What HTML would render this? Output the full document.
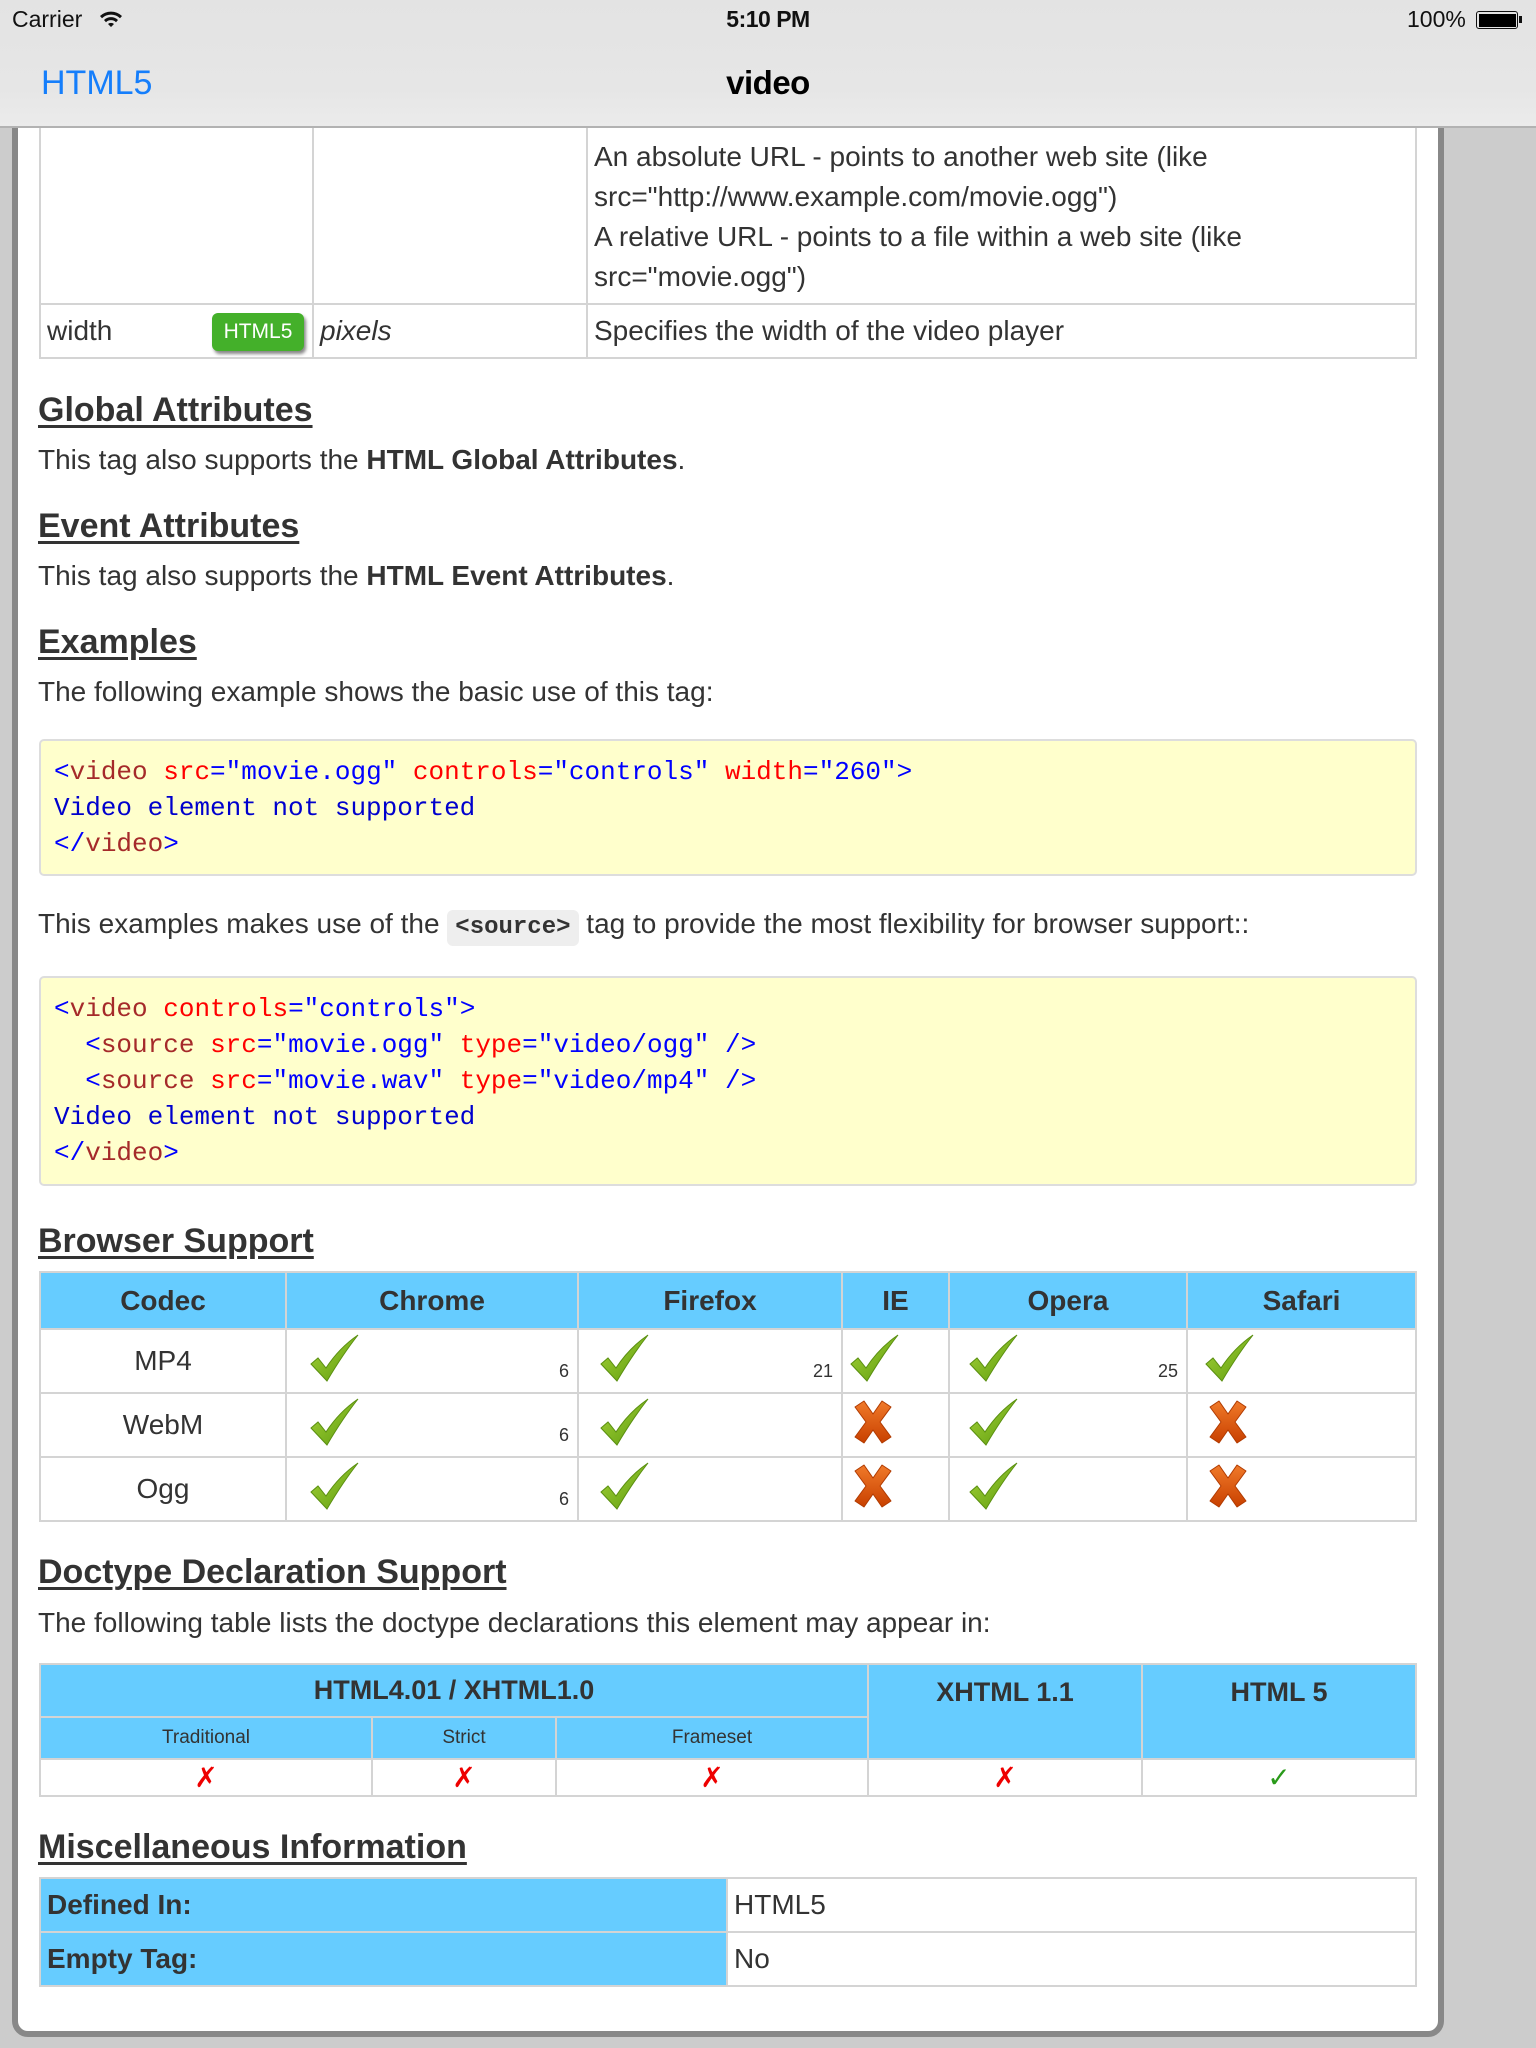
<!DOCTYPE html>
<html><head><meta charset="utf-8"><style>
*{margin:0;padding:0;box-sizing:border-box}
body{width:1536px;height:2048px;overflow:hidden;background:#ccc;font-family:"Liberation Sans",Arial,sans-serif;color:#333;position:relative}
.abs{position:absolute}
#status{left:0;top:0;width:1536px;height:128px;background:linear-gradient(#e3e3e3,#e6e6e6 70%,#ebebeb);border-bottom:2px solid #b2b2b2;z-index:5}
#card{left:12px;top:60px;width:1432px;height:1977px;background:#fff;border:6px solid #888;border-radius:16px}
table{border-collapse:collapse;position:absolute}
td,th{border:2px solid #d4d4d4}
h2{position:absolute;left:38px;font-size:34px;font-weight:bold;text-decoration:underline;text-decoration-thickness:3px;text-underline-offset:4px;color:#333;white-space:nowrap}
p{position:absolute;left:38px;font-size:28px;white-space:nowrap;color:#333}
.code{position:absolute;left:39px;width:1378px;background:#ffffcc;border:2px solid #ddd;border-radius:5px;font-family:"Liberation Mono",monospace;font-size:26px;padding:0 0 0 13px;line-height:36px;color:#0000cd;white-space:pre}
.t{color:#a52a2a}.b{color:#0000ff}.r{color:#ff0000}.v{color:#0000cd}
.hd{background:#66ccff}
</style></head><body>
<div id="card" class="abs"></div>
<div id="status" class="abs">
 <div class="abs" style="left:12px;top:6px;font-size:23px;color:#111">Carrier</div>
 <svg class="abs" style="left:98px;top:9px" width="26" height="20" viewBox="0 0 26 20"><path d="M2 7a16 16 0 0 1 22 0l-2 2.2a13 13 0 0 0-18 0z M6 11a10 10 0 0 1 14 0l-2 2.2a7 7 0 0 0-10 0z M10 15a4.5 4.5 0 0 1 6 0l-3 3z" fill="#111"/></svg>
 <div class="abs" style="left:0;width:1536px;top:6px;text-align:center;font-size:23px;color:#111;font-weight:bold;letter-spacing:-0.5px">5:10 PM</div>
 <div class="abs" style="left:1407px;top:6px;font-size:23px;color:#111">100%</div>
 <div class="abs" style="left:1476px;top:11px;width:42px;height:18px;border:1.5px solid #111;border-radius:3px;padding:1.5px"><div style="width:100%;height:100%;background:#000"></div></div>
 <div class="abs" style="left:1519px;top:16px;width:3px;height:7px;background:#111"></div>
 <div class="abs" style="left:41px;top:64px;font-size:34px;color:#157efb">HTML5</div>
 <div class="abs" style="left:0;width:1536px;top:64px;text-align:center;font-size:33px;color:#000;font-weight:bold;letter-spacing:-0.5px">video</div>
</div>

<table style="left:39px;top:100px;width:1378px;font-size:28px">
<tr style="height:203px"><td style="width:273px"></td><td style="width:274px"></td><td style="vertical-align:bottom;padding:0 6px 6px 6px;line-height:40px">An absolute URL - points to another web site (like<br>src="http://www.example.com/movie.ogg")<br>A relative URL - points to a file within a web site (like<br>src="movie.ogg")</td></tr>
<tr style="height:54px"><td style="padding-left:6px;position:relative">width<span class="abs" style="left:171px;top:8px;width:92px;height:38px;background:#44b02a;border-radius:6px;color:#fff;font-size:21px;line-height:38px;text-align:center;box-shadow:2px 3px 3px #888">HTML5</span></td><td style="padding-left:6px;font-style:italic">pixels</td><td style="padding-left:6px">Specifies the width of the video player</td></tr>
</table>

<h2 style="top:391px">Global Attributes</h2>
<p style="top:444px">This tag also supports the <b>HTML Global Attributes</b>.</p>
<h2 style="top:507px">Event Attributes</h2>
<p style="top:560px">This tag also supports the <b>HTML Event Attributes</b>.</p>
<h2 style="top:623px">Examples</h2>
<p style="top:676px">The following example shows the basic use of this tag:</p>

<div class="code" style="top:739px;height:137px;padding-top:13px"><span class="b">&lt;</span><span class="t">video</span> <span class="r">src</span><span class="b">="movie.ogg"</span> <span class="r">controls</span><span class="b">="controls"</span> <span class="r">width</span><span class="b">="260"&gt;</span>
<span class="v">Video element not supported</span>
<span class="b">&lt;/</span><span class="t">video</span><span class="b">&gt;</span></div>

<p style="top:908px">This examples makes use of the <span style="display:inline-block;background:#eee;border-radius:6px;font-family:'Liberation Mono',monospace;font-weight:bold;font-size:24px;padding:2px 8px;line-height:32px">&lt;source&gt;</span> tag to provide the most flexibility for browser support::</p>

<div class="code" style="top:976px;height:210px;padding-top:13px"><span class="b">&lt;</span><span class="t">video</span> <span class="r">controls</span><span class="b">="controls"&gt;</span>
  <span class="b">&lt;</span><span class="t">source</span> <span class="r">src</span><span class="b">="movie.ogg"</span> <span class="r">type</span><span class="b">="video/ogg" /&gt;</span>
  <span class="b">&lt;</span><span class="t">source</span> <span class="r">src</span><span class="b">="movie.wav"</span> <span class="r">type</span><span class="b">="video/mp4" /&gt;</span>
<span class="v">Video element not supported</span>
<span class="b">&lt;/</span><span class="t">video</span><span class="b">&gt;</span></div>

<h2 style="top:1222px">Browser Support</h2>

<svg width="0" height="0" style="position:absolute"><defs>
<linearGradient id="gc" x1="0" y1="0" x2="1" y2="1"><stop offset="0" stop-color="#a6d43a"/><stop offset="1" stop-color="#5c9a0c"/></linearGradient>
<linearGradient id="gx" x1="0" y1="0" x2="0" y2="1"><stop offset="0" stop-color="#f07a2a"/><stop offset="1" stop-color="#c84000"/></linearGradient>
<symbol id="ck" viewBox="0 0 50 48"><path d="M2 30 L9 24 L17 34 Q30 14 49 1 Q34 20 18 47 Z" fill="url(#gc)" stroke="#5a8f10" stroke-width="1"/></symbol>
<symbol id="cx" viewBox="0 0 44 44"><path d="M4 7 L13 1 L22 14 L31 1 L40 7 L29 22 L40 37 L31 43 L22 30 L13 43 L4 37 L15 22 Z" fill="url(#gx)" stroke="#b03a00" stroke-width="1" stroke-linejoin="round"/></symbol>
</defs></svg>

<table style="left:39px;top:1271px;width:1378px;font-size:28px;text-align:center">
<tr class="hd" style="height:57px;font-weight:bold;font-size:28px"><td style="width:246px">Codec</td><td style="width:292px">Chrome</td><td style="width:264px">Firefox</td><td style="width:107px">IE</td><td style="width:238px">Opera</td><td>Safari</td></tr>
<tr style="height:64px"><td>MP4</td><td style="position:relative"><svg class="abs" style="left:22px;top:4px" width="50" height="48"><use href="#ck"/></svg><span class="abs" style="right:8px;bottom:10px;font-size:18px">6</span></td><td style="position:relative"><svg class="abs" style="left:20px;top:4px" width="50" height="48"><use href="#ck"/></svg><span class="abs" style="right:8px;bottom:10px;font-size:18px">21</span></td><td style="position:relative"><svg class="abs" style="left:6px;top:4px" width="50" height="48"><use href="#ck"/></svg></td><td style="position:relative"><svg class="abs" style="left:18px;top:4px" width="50" height="48"><use href="#ck"/></svg><span class="abs" style="right:8px;bottom:10px;font-size:18px">25</span></td><td style="position:relative"><svg class="abs" style="left:16px;top:4px" width="50" height="48"><use href="#ck"/></svg></td></tr>
<tr style="height:64px"><td>WebM</td><td style="position:relative"><svg class="abs" style="left:22px;top:4px" width="50" height="48"><use href="#ck"/></svg><span class="abs" style="right:8px;bottom:10px;font-size:18px">6</span></td><td style="position:relative"><svg class="abs" style="left:20px;top:4px" width="50" height="48"><use href="#ck"/></svg></td><td style="position:relative"><svg class="abs" style="left:8px;top:6px" width="44" height="44"><use href="#cx"/></svg></td><td style="position:relative"><svg class="abs" style="left:18px;top:4px" width="50" height="48"><use href="#ck"/></svg></td><td style="position:relative"><svg class="abs" style="left:18px;top:6px" width="44" height="44"><use href="#cx"/></svg></td></tr>
<tr style="height:64px"><td>Ogg</td><td style="position:relative"><svg class="abs" style="left:22px;top:4px" width="50" height="48"><use href="#ck"/></svg><span class="abs" style="right:8px;bottom:10px;font-size:18px">6</span></td><td style="position:relative"><svg class="abs" style="left:20px;top:4px" width="50" height="48"><use href="#ck"/></svg></td><td style="position:relative"><svg class="abs" style="left:8px;top:6px" width="44" height="44"><use href="#cx"/></svg></td><td style="position:relative"><svg class="abs" style="left:18px;top:4px" width="50" height="48"><use href="#ck"/></svg></td><td style="position:relative"><svg class="abs" style="left:18px;top:6px" width="44" height="44"><use href="#cx"/></svg></td></tr>
</table>

<h2 style="top:1553px">Doctype Declaration Support</h2>
<p style="top:1607px">The following table lists the doctype declarations this element may appear in:</p>

<table style="left:39px;top:1663px;width:1378px;text-align:center">
<tr class="hd" style="height:53px;font-weight:bold;font-size:27px"><td colspan="3">HTML4.01 / XHTML1.0</td><td rowspan="2" style="width:274px;vertical-align:top;padding-top:12px">XHTML 1.1</td><td rowspan="2" style="width:274px;vertical-align:top;padding-top:12px">HTML 5</td></tr>
<tr class="hd" style="height:42px;font-size:19px"><td style="width:332px">Traditional</td><td style="width:184px">Strict</td><td>Frameset</td></tr>
<tr style="height:37px;font-size:28px"><td style="color:#e00">✗</td><td style="color:#e00">✗</td><td style="color:#e00">✗</td><td style="color:#e00">✗</td><td style="color:#2a9a1a">✓</td></tr>
</table>

<h2 style="top:1828px">Miscellaneous Information</h2>
<table style="left:39px;top:1877px;width:1378px;font-size:28px">
<tr style="height:54px"><td class="hd" style="width:687px;font-weight:bold;padding-left:6px">Defined In:</td><td style="padding-left:6px">HTML5</td></tr>
<tr style="height:54px"><td class="hd" style="font-weight:bold;padding-left:6px">Empty Tag:</td><td style="padding-left:6px">No</td></tr>
</table>
</body></html>
